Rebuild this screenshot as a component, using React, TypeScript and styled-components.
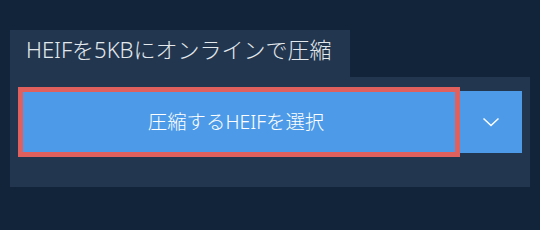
import React from 'react';
import styled, { createGlobalStyle } from 'styled-components';

const GlobalStyle = createGlobalStyle`
  html, body {
    margin: 0;
    padding: 0;
    background: #12243a;
  }
  body {
    font-family: "Noto Sans", "Noto Sans CJK JP", sans-serif;
  }
`;

const Page = styled.div`
  width: 540px;
  height: 230px;
  padding: 30px 10px 0;
  box-sizing: border-box;
`;

const Tab = styled.div`
  display: inline-block;
  height: 47px;
  padding: 0 18px 8px 16px;
  box-sizing: border-box;
  background: #22374f;
  color: #e4e9ee;
  font-size: 22px;
  font-weight: 300;
  line-height: 39px;
  white-space: nowrap;
`;

const Panel = styled.div`
  height: 110px;
  padding: 10px 8px 0;
  box-sizing: border-box;
  background: #22374f;
`;

const Row = styled.div`
  display: flex;
  align-items: center;
`;

const MainButton = styled.button`
  flex: 1;
  height: 70px;
  box-sizing: border-box;
  border: 5px solid #e0605e;
  background: #4d9be8;
  color: #ffffff;
  font-family: inherit;
  font-size: 19.4px;
  font-weight: 300;
  line-height: 60px;
  padding: 0 6px 0 0;
  cursor: pointer;
`;

const MenuButton = styled.button`
  width: 62px;
  height: 62px;
  border: none;
  padding: 0;
  background: #4d9be8;
  display: flex;
  align-items: center;
  justify-content: center;
  cursor: pointer;
`;

export default function App() {
  return (
    <>
      <GlobalStyle />
      <Page>
        <Tab>HEIFを5KBにオンラインで圧縮</Tab>
        <Panel>
          <Row>
            <MainButton>圧縮するHEIFを選択</MainButton>
            <MenuButton aria-label="more">
              <svg width="18" height="10" viewBox="0 0 18 10">
                <path d="M1.5 1.5 L9 8.5 L16.5 1.5" fill="none" stroke="#ffffff" strokeWidth="1.5" />
              </svg>
            </MenuButton>
          </Row>
        </Panel>
      </Page>
    </>
  );
}
